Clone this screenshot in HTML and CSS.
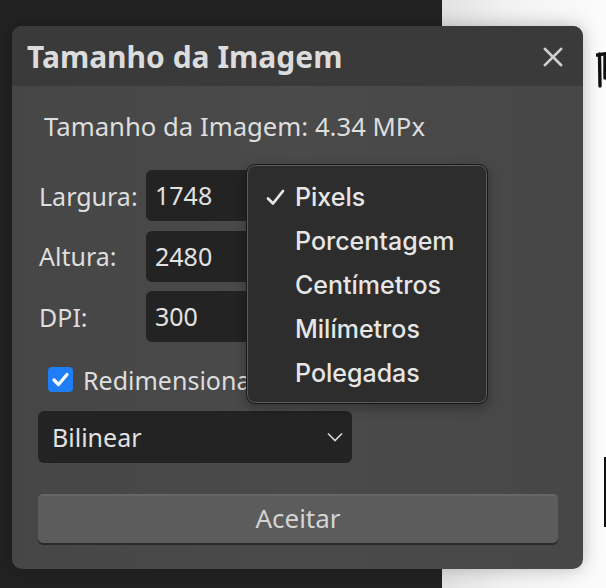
FILE: index.html
```html
<!DOCTYPE html>
<html lang="pt">
<head>
    <meta charset="UTF-8">
    <title>Tamanho da Imagem</title>
    <link rel="stylesheet" href="styles.css">
</head>
<body>
    <div class="workspace">
        <div class="sidebar"></div>
        <div class="canvas">
            <svg class="ink ink-top" width="12" height="36" viewBox="0 0 12 36">
                <path d="M1 3 L11 1.5 M3.5 2 L4 34 M9 3 L9 26" fill="none" stroke="#111" stroke-width="3.4" stroke-linecap="round"/>
            </svg>
            <span class="ink ink-bottom"></span>
        </div>
    </div>

    <div class="dialog">
        <div class="dialog-header">
            <span class="dialog-title">Tamanho da Imagem</span>
            <svg class="close" width="20" height="20" viewBox="0 0 20 20">
                <path d="M2 2 L18 18 M18 2 L2 18" stroke="#cfcfcf" stroke-width="2.6" stroke-linecap="square"/>
            </svg>
        </div>
        <div class="dialog-body">
            <div class="info">Tamanho da Imagem: 4.34 MPx</div>

            <div class="fields">
                <label class="field-label">Largura:</label>
                <div class="field-input">1748</div>
                <label class="field-label">Altura:</label>
                <div class="field-input">2480</div>
                <label class="field-label">DPI:</label>
                <div class="field-input">300</div>
            </div>

            <div class="check-row">
                <span class="checkbox">
                    <svg width="25" height="25" viewBox="0 0 25 25">
                        <path d="M6 13 L10.5 17.5 L19 7.5" fill="none" stroke="#fff" stroke-width="3.2" stroke-linecap="round" stroke-linejoin="round"/>
                    </svg>
                </span>
                <span class="check-label">Redimensionar</span>
            </div>

            <div class="select">
                <span>Bilinear</span>
                <svg width="16" height="10" viewBox="0 0 16 10">
                    <path d="M1 1.5 L8 8.5 L15 1.5" fill="none" stroke="#d8d8d8" stroke-width="1.6"/>
                </svg>
            </div>

            <div class="button">Aceitar</div>
        </div>
    </div>

    <ul class="menu">
        <li class="menu-item">
            <span class="tick">
                <svg width="19" height="17" viewBox="0 0 19 17">
                    <path d="M2 9.5 L7 14.5 L17 2" fill="none" stroke="#e6e6e6" stroke-width="2.8" stroke-linecap="round" stroke-linejoin="round"/>
                </svg>
            </span>Pixels
        </li>
        <li class="menu-item"><span class="tick"></span>Porcentagem</li>
        <li class="menu-item"><span class="tick"></span>Centímetros</li>
        <li class="menu-item"><span class="tick"></span>Milímetros</li>
        <li class="menu-item"><span class="tick"></span>Polegadas</li>
    </ul>
</body>
</html>
```

FILE: styles.css
```css
body {
    margin: 0;
    width: 606px;
    height: 588px;
    overflow: hidden;
    font-family: "Noto Sans", "Open Sans", sans-serif;
    background-color: #222;
}
.workspace {
    display: flex;
    height: 588px;
}
.sidebar {
    width: 442px;
    background-color: #222;
}
.canvas {
    flex: 1;
    position: relative;
    background: linear-gradient(90deg, #e2e2e2 0%, #f2f2f2 40%, #fcfcfc 100%);
}
.ink {
    position: absolute;
}
.ink-top {
    left: 154px;
    top: 52px;
}
.ink-bottom {
    left: 162px;
    top: 457px;
    width: 2px;
    height: 70px;
    background-color: #111;
}

.dialog {
    position: absolute;
    left: 12px;
    top: 26px;
    width: 571px;
    height: 543px;
    border-radius: 10px;
    overflow: hidden;
    background: linear-gradient(90deg, #464646 0%, #4a4a4a 50%, #474747 100%);
    box-shadow: 0 0 18px rgba(0, 0, 0, 0.25);
}
.dialog-header {
    height: 60px;
    display: flex;
    align-items: center;
    justify-content: space-between;
    padding: 0 20px 0 15px;
    background-color: #3a3a3a;
}
.dialog-title {
    font-size: 30px;
    font-weight: bold;
    color: #dcdcdc;
}
.close {
    margin-top: 2px;
}
.dialog-body {
    padding: 0 25px 0 26px;
}
.info {
    margin: 23px 0 0 6px;
    height: 36px;
    line-height: 36px;
    font-size: 25.7px;
    color: #dedede;
}
.fields {
    display: grid;
    grid-template-columns: 108px 120px;
    row-gap: 9.5px;
    margin-top: 25px;
    align-items: center;
}
.field-label {
    font-size: 25px;
    color: #dedede;
    padding-left: 1px;
}
.field-input {
    height: 51px;
    line-height: 51px;
    padding-left: 9px;
    border-radius: 6px;
    background-color: #232323;
    font-size: 25px;
    color: #e2e2e2;
}
.check-row {
    display: flex;
    align-items: center;
    gap: 10px;
    margin: 25px 0 0 10px;
    height: 25px;
}
.checkbox {
    width: 25px;
    height: 25px;
    border-radius: 4px;
    background-color: #1f7ef6;
    display: flex;
}
.check-label {
    font-size: 25px;
    color: #dedede;
}
.select {
    width: 314px;
    height: 52px;
    box-sizing: border-box;
    margin-top: 19px;
    padding: 0 9px 0 14px;
    display: flex;
    align-items: center;
    justify-content: space-between;
    border-radius: 6px;
    background-color: #232323;
    font-size: 25px;
    color: #e2e2e2;
}
.button {
    width: 520px;
    height: 49px;
    box-sizing: border-box;
    margin-top: 31px;
    border-radius: 5px;
    background-color: #5c5c5c;
    border-top: 2px solid #666;
    box-shadow: 0 2px 0 #2a2a2a;
    text-align: center;
    line-height: 45px;
    font-size: 26px;
    color: #d4d4d4;
}

.menu {
    position: absolute;
    left: 246px;
    top: 164px;
    width: 242px;
    height: 240px;
    box-sizing: border-box;
    margin: 0;
    padding: 10px 0 0 0;
    list-style: none;
    border-radius: 9px;
    background-color: #2d2d2d;
    border: 1px solid #1a1a1a;
    box-shadow: inset 0 0 0 1px #5a5a5a, 0 4px 12px rgba(0, 0, 0, 0.3);
    font-family: Inter, "Noto Sans", sans-serif;
}
.menu-item {
    height: 44px;
    display: flex;
    align-items: center;
    font-size: 25px;
    font-weight: 500;
    color: #e6e6e6;
}
.tick {
    width: 48px;
    display: flex;
    justify-content: flex-end;
    padding-right: 10px;
    box-sizing: border-box;
}
```
